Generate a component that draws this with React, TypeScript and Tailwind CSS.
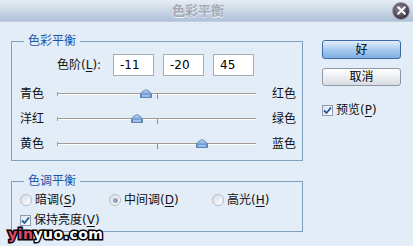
import type { ReactNode } from "react";

const cjk = "font-['DejaVu_Sans','Noto_Sans_CJK_SC',sans-serif]";

function Ul({ children }: { children: ReactNode }) {
  return <span className="underline underline-offset-2">{children}</span>;
}

function CheckBox({ checked }: { checked: boolean }) {
  return (
    <span className="flex h-[11px] w-[11px] items-center justify-center border border-[#8e9cad] bg-gradient-to-br from-[#dfe4ea] to-white">
      {checked && (
        <svg width="9" height="9" viewBox="0 0 9 9">
          <path d="M1 4.5 L3.5 7 L8 1.5" fill="none" stroke="#21579a" strokeWidth="1.8" />
        </svg>
      )}
    </span>
  );
}

function Radio({ checked, label }: { checked: boolean; label: ReactNode }) {
  return (
    <div className="flex items-center gap-[3px]">
      <span className="flex h-[12px] w-[12px] items-center justify-center rounded-full border border-[#b1bccb] bg-gradient-to-br from-[#d6dce4] to-white">
        {checked && <span className="h-[5px] w-[5px] rounded-full bg-[#8ea4bf]" />}
      </span>
      <span>{label}</span>
    </div>
  );
}

function Slider({ left, right, value }: { left: string; right: string; value: number }) {
  return (
    <div className="flex h-[25px] items-center">
      <span className="w-[45px] pl-[8px]">{left}</span>
      <div className="relative h-[2px] w-[199px] border-t border-[#a19c94] bg-white">
        <span className="absolute left-0 top-[-2px] h-[4px] w-px bg-[#a19c94]" />
        <span className="absolute left-[100px] top-0 h-[5px] w-px bg-[#8c9096]" />
        <svg
          className="absolute top-[-5px]"
          style={{ left: 100 + value - 6 }}
          width="12"
          height="9"
          viewBox="0 0 12 9"
        >
          <defs>
            <linearGradient id={`g${left}`} x1="0" y1="0" x2="0" y2="1">
              <stop offset="0" stopColor="#d3e4f7" />
              <stop offset="0.5" stopColor="#7fa9dc" />
              <stop offset="1" stopColor="#3f77bd" />
            </linearGradient>
          </defs>
          <path d="M0.5 5 Q2 2 6 0.5 Q10 2 11.5 5 L11.5 8.5 L0.5 8.5 Z" fill={`url(#g${left})`} stroke="#4d77a8" strokeWidth="0.8" />
          <path d="M2 7 L10 7" stroke="#e6f0fb" strokeWidth="1" />
        </svg>
      </div>
      <span className="ml-[16px]">{right}</span>
    </div>
  );
}

function NumBox({ v }: { v: string }) {
  return (
    <div className="flex h-[22px] w-[41px] items-center border border-[#a7adb5] bg-white pl-[6px] font-['DejaVu_Sans',sans-serif] text-[12px] text-black">
      {v}
    </div>
  );
}

export default function App() {
  return (
    <div className={`relative h-[246px] w-[413px] overflow-hidden bg-[#e3edf8] text-[12px] leading-[16px] text-[#111] ${cjk}`}>
      <div className="flex h-[22px] items-center border-b border-[#c2cfdf] bg-gradient-to-b from-[#e6ecf4] via-[#ccd8e7] to-[#afc1d9]">
        <div className="flex-1 pl-[4px] text-center text-[13px] font-bold text-[#a2aab5] [text-shadow:0_1px_0_#f0f4f9]">
          色彩平衡
        </div>
        <div className="mr-[3px] flex h-[18px] w-[18px] items-center justify-center rounded-full border border-[#9b97a4] bg-[radial-gradient(circle_at_40%_35%,#8d8598,#3f3848_70%)]">
          <svg width="9" height="9" viewBox="0 0 9 9">
            <path d="M1.2 1.2 L7.8 7.8 M7.8 1.2 L1.2 7.8" stroke="#fff" strokeWidth="2" strokeLinecap="round" />
          </svg>
        </div>
      </div>

      <div className="flex pl-[11px]">
        <div className="flex w-[292px] flex-col">
          <fieldset className="mt-[11px] border border-[#7f9fbd] pb-[4px]">
            <legend className="ml-[12px] px-[4px] text-[#1d56a6]">色彩平衡</legend>
            <div className="mt-[5px] flex items-center">
              <span className="w-[101px] pl-[45px]">
                色阶(<Ul>L</Ul>):
              </span>
              <div className="flex gap-[9px]">
                <NumBox v="-11" />
                <NumBox v="-20" />
                <NumBox v="45" />
              </div>
            </div>
            <div className="mt-[5px]">
              <Slider left="青色" right="红色" value={-11} />
              <Slider left="洋红" right="绿色" value={-20} />
              <Slider left="黄色" right="蓝色" value={45} />
            </div>
          </fieldset>

          <fieldset className="mt-[12px] border border-[#7f9fbd] pb-[3px]">
            <legend className="ml-[12px] px-[4px] text-[#1d56a6]">色调平衡</legend>
            <div className="mt-[3px] flex items-center pl-[8px]">
              <div className="w-[89px]">
                <Radio checked={false} label={<>暗调(<Ul>S</Ul>)</>} />
              </div>
              <div className="w-[103px]">
                <Radio checked label={<>中间调(<Ul>D</Ul>)</>} />
              </div>
              <Radio checked={false} label={<>高光(<Ul>H</Ul>)</>} />
            </div>
            <div className="mt-[4px] flex items-center gap-[3px] pl-[8px]">
              <CheckBox checked />
              <span>
                保持亮度(<Ul>V</Ul>)
              </span>
            </div>
          </fieldset>
        </div>

        <div className="ml-[19px] flex w-[79px] flex-col pt-[18px]">
          <button className="h-[19px] rounded-[3px] border border-[#3b6aa6] bg-gradient-to-b from-[#e3effc] via-[#a9cbef] to-[#80b0e3] text-[12px] leading-[16px] text-black">
            好
          </button>
          <button className="mt-[9px] h-[18px] rounded-[3px] border border-[#8f98a5] bg-gradient-to-b from-white to-[#d9dde3] text-[12px] leading-[16px] text-black">
            取消
          </button>
          <div className="mt-[16px] flex items-center gap-[3px]">
            <CheckBox checked />
            <span>
              预览(<Ul>P</Ul>)
            </span>
          </div>
        </div>
      </div>

      <div className="absolute left-[8px] top-[227px] font-['DejaVu_Sans',sans-serif] text-[14px] font-black leading-[14px] tracking-[0.5px] [-webkit-text-stroke:3px_#000] [paint-order:stroke_fill]">
        <span className="text-[#e0486a]">yin</span>
        <span className="text-white">yuo.com</span>
      </div>
    </div>
  );
}
